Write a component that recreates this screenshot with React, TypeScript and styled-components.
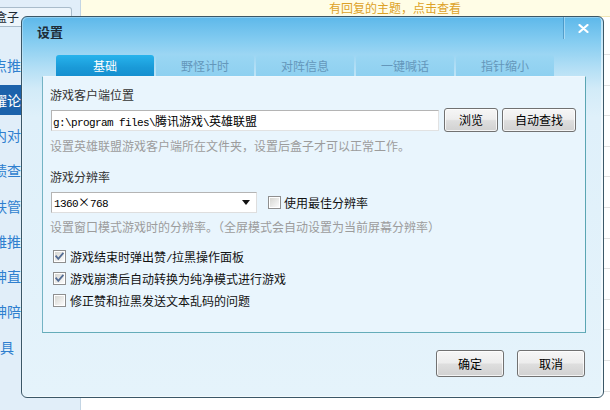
import React from "react";
import styled, { createGlobalStyle } from "styled-components";

const CJK = `"Noto Sans CJK SC", "Noto Sans", sans-serif`;
const MONO = `"Liberation Mono", "DejaVu Sans Mono", monospace`;

const GlobalStyle = createGlobalStyle`
  html, body { margin: 0; padding: 0; }
  body {
    width: 610px; height: 410px; overflow: hidden; background: #ffffff;
    font-family: ${CJK}; font-size: 12px;
  }
  * { box-sizing: border-box; }
`;

const Screen = styled.div`
  position: relative;
  width: 610px;
  height: 410px;
  overflow: hidden;
  display: flex;
`;

/* ---------- background app ---------- */
const Sidebar = styled.aside`
  width: 81px;
  flex: none;
  height: 100%;
  background: #e1eef9;
  border-right: 1px solid #c3d5e4;
  padding-top: 7px;
  overflow: hidden;
`;

const BoxTab = styled.div`
  width: 72px;
  height: 20px;
  background: #edf5fb;
  border: 1px solid #a9bccb;
  border-left: none;
  border-radius: 0 3px 3px 0;
  font-size: 12px;
  line-height: 18px;
  color: #1e2a33;
  white-space: nowrap;
  overflow: hidden;
`;

const Shift = styled.span<{ $x: number }>`
  display: inline-block;
  margin-left: ${(p) => p.$x}px;
`;

const NavList = styled.ul`
  list-style: none;
  margin: 20px 0 0;
  padding: 0;
`;

const NavItem = styled.li`
  height: 35.25px;
  display: flex;
  align-items: center;
`;

const NavLabel = styled.div<{ $active?: boolean }>`
  width: 100%;
  height: 30px;
  line-height: 30px;
  font-size: 14px;
  white-space: nowrap;
  overflow: hidden;
  color: ${(p) => (p.$active ? "#ffffff" : "#2f7fcf")};
  background: ${(p) => (p.$active ? "#1c62ab" : "transparent")};
`;

const Main = styled.main`
  flex: 1;
  display: flex;
  flex-direction: column;
  overflow: hidden;
`;

const Notice = styled.div`
  height: 17px;
  flex: none;
  background: #fffde6;
  border-bottom: 1px solid #f1e6b6;
  padding-left: 248px;
  color: #dda228;
  font-size: 12px;
  line-height: 16px;
  white-space: nowrap;
`;

const Row = styled.div<{ $h: number }>`
  flex: none;
  height: ${(p) => p.$h}px;
  border-bottom: 1px solid #e2e2e2;
  background: #ffffff;
`;

/* ---------- dialog ---------- */
const Dialog = styled.section`
  position: absolute;
  left: 21px;
  top: 16px;
  width: 583px;
  height: 382px;
  border: 1px solid #3b5767;
  border-radius: 6px;
  background: linear-gradient(
    180deg,
    #5db8ea 0px,
    #86cdf1 25px,
    #b1def5 50px,
    #d2ebf8 72px,
    #dff0fa 100px,
    #e5f3fb 100%
  );
  box-shadow: inset 1px 1px 0 rgba(255, 255, 255, 0.3),
    inset -2px -1px 0 rgba(255, 255, 255, 0.55);
  display: flex;
  flex-direction: column;
  font-family: ${CJK};
`;

const TitleBar = styled.header`
  display: flex;
  height: 30px;
  flex: none;
`;

const Title = styled.h1`
  flex: 1;
  margin: 0;
  padding-left: 15px;
  font-size: 13px;
  font-weight: 700;
  line-height: 30px;
  color: #1d2c36;
`;

const CloseBox = styled.div`
  width: 40px;
  height: 22px;
  display: flex;
  align-items: center;
  justify-content: center;
  border-left: 1px solid rgba(40, 110, 160, 0.45);
  box-shadow: inset 1px 0 0 rgba(255, 255, 255, 0.35);
`;

const TabStrip = styled.nav`
  display: flex;
  gap: 2px;
  margin: 8px 0 0 34px;
  height: 21px;
  flex: none;
`;

const Tab = styled.div<{ $active?: boolean }>`
  width: 98px;
  height: 21px;
  border-radius: 3px 3px 0 0;
  text-align: center;
  font-size: 12px;
  line-height: 21px;
  color: ${(p) => (p.$active ? "#ffffff" : "#6497bb")};
  background: ${(p) =>
    p.$active
      ? "linear-gradient(180deg, #27b3ec 0%, #1a9ad8 60%, #1690d0 100%)"
      : "linear-gradient(180deg, #9ad6f3 0%, #8ed0f0 100%)"};
`;

const Body = styled.div`
  padding: 0 17px 0 20px;
  flex: none;
`;

const Panel = styled.div`
  height: 257px;
  background: #e9f5fd;
  border: 1px solid #74b3c4;
  border-top-color: #eef7fd;
  border-right-color: #5aa5b3;
  border-bottom-color: #64acb9;
  padding: 0 0 0 7px;
  display: flex;
  flex-direction: column;
`;

const Label = styled.div<{ $top: number }>`
  margin-top: ${(p) => p.$top}px;
  height: 16px;
  line-height: 16px;
  font-size: 12px;
  color: #333333;
  white-space: nowrap;
`;

const Hint = styled(Label)`
  color: #9c9c9c;
`;

const FieldRow = styled.div<{ $top: number; $h: number }>`
  margin-top: ${(p) => p.$top}px;
  height: ${(p) => p.$h}px;
  display: flex;
  align-items: center;
`;

const PathField = styled.div`
  width: 388px;
  height: 21px;
  margin-left: 1px;
  background: #ffffff;
  border: 1px solid #b4b4b4;
  border-right-color: #e2e2e2;
  border-bottom-color: #e2e2e2;
  padding-left: 1px;
  font-size: 12px;
  line-height: 19px;
  color: #000000;
  white-space: nowrap;
  overflow: hidden;
`;

const Ascii = styled.span`
  font-family: ${MONO};
  font-size: 11px;
  letter-spacing: -0.6px;
`;

const Times = styled.span`
  display: inline-block;
  width: 12px;
  text-align: center;
`;

const Button = styled.button<{ $w: number; $h: number; $gap?: number }>`
  width: ${(p) => p.$w}px;
  height: ${(p) => p.$h}px;
  margin-left: ${(p) => p.$gap ?? 0}px;
  flex: none;
  padding: 0;
  border: 1px solid #717171;
  border-radius: 3px;
  background: linear-gradient(
    180deg,
    #f6f6f6 0%,
    #ededed 47%,
    #dedede 53%,
    #d1d1d1 100%
  );
  box-shadow: inset 0 0 0 1px rgba(255, 255, 255, 0.75);
  font-family: ${CJK};
  font-size: 12px;
  line-height: 1;
  color: #000000;
`;

const Select = styled.div`
  width: 206px;
  height: 21px;
  margin-left: 1px;
  background: #ffffff;
  border: 1px solid #b4b4b4;
  border-right-color: #dedede;
  border-bottom-color: #dedede;
  padding: 0 6px 0 2px;
  display: flex;
  align-items: center;
  justify-content: space-between;
  font-size: 12px;
  line-height: 19px;
  color: #000000;
  white-space: nowrap;
`;

const CheckLine = styled.label<{ $gap?: number }>`
  display: flex;
  align-items: center;
  gap: 3px;
  margin-left: ${(p) => p.$gap ?? 0}px;
  font-size: 12px;
  color: #111111;
  white-space: nowrap;
`;

const CheckList = styled.div`
  margin-top: 10px;
  padding-left: 3px;
  display: flex;
  flex-direction: column;
`;

const CheckRow = styled(CheckLine)`
  height: 22px;
  gap: 4px;
`;

const Footer = styled.footer`
  display: flex;
  justify-content: flex-end;
  gap: 13px;
  padding: 17px 18px 0 0;
`;

const Check = ({ checked }: { checked?: boolean }) => (
  <svg width="13" height="13" viewBox="0 0 13 13" style={{ flex: "none" }}>
    <defs>
      <linearGradient id="cbfill" x1="0" y1="0" x2="1" y2="1">
        <stop offset="0" stopColor="#d6d6d2" />
        <stop offset="1" stopColor="#fbfbfb" />
      </linearGradient>
    </defs>
    <rect x="0.5" y="0.5" width="12" height="12" fill="#ffffff" stroke="#8f8f8f" />
    <rect x="2" y="2" width="9" height="9" fill="url(#cbfill)" />
    {checked && (
      <path
        d="M3.2 6.3 L5.3 8.8 L9.8 3.6"
        fill="none"
        stroke="#536c94"
        strokeWidth="1.8"
        strokeLinecap="square"
      />
    )}
  </svg>
);

const navItems: { text: string; x: number; active?: boolean }[] = [
  { text: "热点推荐", x: -21 },
  { text: "精耀论坛", x: -21, active: true },
  { text: "局内对战", x: -21 },
  { text: "战绩查询", x: -21 },
  { text: "皮肤管理", x: -21 },
  { text: "英雄推出", x: -21 },
  { text: "大神直播", x: -21 },
  { text: "大神陪练", x: -21 },
  { text: "实用工具", x: -42 },
];

const rowHeights = [38, 30.6, 30.6, 30.6, 30.6, 30.6, 30.6, 30.6, 30.6, 30.6, 30.6, 30.6, 30.6];

const tabs = ["基础", "野怪计时", "对阵信息", "一键喊话", "指针缩小"];

export default function App() {
  return (
    <>
      <GlobalStyle />
      <Screen>
        <Sidebar>
          <BoxTab>
            <Shift $x={-29}>英雄盒子</Shift>
          </BoxTab>
          <NavList>
            {navItems.map((n) => (
              <NavItem key={n.text}>
                <NavLabel $active={n.active}>
                  <Shift $x={n.x}>{n.text}</Shift>
                </NavLabel>
              </NavItem>
            ))}
          </NavList>
        </Sidebar>
        <Main>
          <Notice>有回复的主题，点击查看</Notice>
          {rowHeights.map((h, i) => (
            <Row key={i} $h={h} />
          ))}
        </Main>

        <Dialog>
          <TitleBar>
            <Title>设置</Title>
            <CloseBox>
              <svg width="11" height="9" viewBox="0 0 11 9">
                <path
                  d="M1.5 1 L9.5 8 M9.5 1 L1.5 8"
                  stroke="#ffffff"
                  strokeWidth="2.2"
                  strokeLinecap="round"
                />
              </svg>
            </CloseBox>
          </TitleBar>
          <TabStrip>
            {tabs.map((t, i) => (
              <Tab key={t} $active={i === 0}>
                {t}
              </Tab>
            ))}
          </TabStrip>
          <Body>
            <Panel>
              <Label $top={10}>游戏客户端位置</Label>
              <FieldRow $top={5} $h={24}>
                <PathField>
                  <Ascii>g:\program files\</Ascii>腾讯游戏<Ascii>\</Ascii>英雄联盟
                </PathField>
                <Button $w={54} $h={24} $gap={5}>
                  浏览
                </Button>
                <Button $w={74} $h={24} $gap={4}>
                  自动查找
                </Button>
              </FieldRow>
              <Hint $top={6}>设置英雄联盟游戏客户端所在文件夹，设置后盒子才可以正常工作。</Hint>
              <Label $top={15}>游戏分辨率</Label>
              <FieldRow $top={7} $h={21}>
                <Select>
                  <span>
                    <Ascii>1360</Ascii>
                    <Times>×</Times>
                    <Ascii>768</Ascii>
                  </span>
                  <svg width="8" height="5" viewBox="0 0 8 5">
                    <path d="M0 0 H8 L4 5 Z" fill="#111111" />
                  </svg>
                </Select>
                <CheckLine $gap={11}>
                  <Check />
                  <span>使用最佳分辨率</span>
                </CheckLine>
              </FieldRow>
              <Hint $top={6}>设置窗口模式游戏时的分辨率。（全屏模式会自动设置为当前屏幕分辨率）</Hint>
              <CheckList>
                <CheckRow>
                  <Check checked />
                  <span>
                    游戏结束时弹出赞<Ascii>/</Ascii>拉黑操作面板
                  </span>
                </CheckRow>
                <CheckRow>
                  <Check checked />
                  <span>游戏崩溃后自动转换为纯净模式进行游戏</span>
                </CheckRow>
                <CheckRow>
                  <Check />
                  <span>修正赞和拉黑发送文本乱码的问题</span>
                </CheckRow>
              </CheckList>
            </Panel>
          </Body>
          <Footer>
            <Button $w={68} $h={27}>
              确定
            </Button>
            <Button $w={68} $h={27}>
              取消
            </Button>
          </Footer>
        </Dialog>
      </Screen>
    </>
  );
}
